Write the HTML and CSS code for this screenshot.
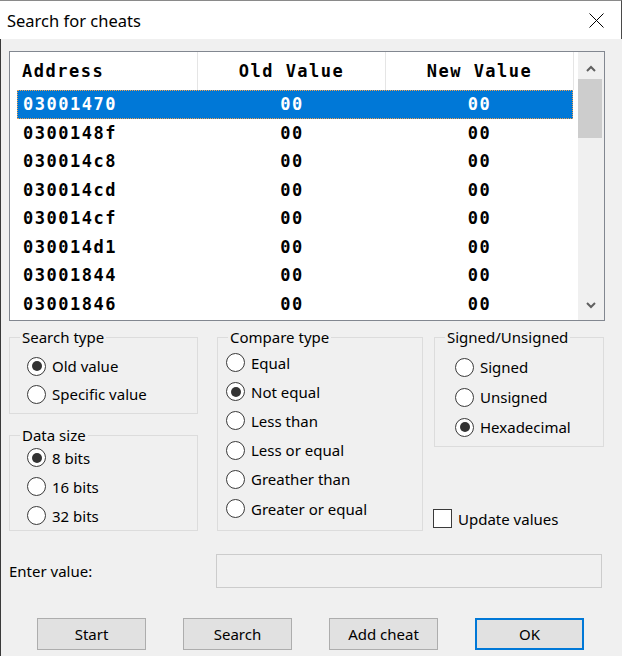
FILE: index.html
```html
<!DOCTYPE html>
<html>
<head>
<meta charset="utf-8">
<title>Search for cheats</title>
<link rel="stylesheet" href="styles.css">
</head>
<body>
<div class="window">
  <div class="titlebar">
    <span class="title">Search for cheats</span>
    <svg class="close" width="15" height="15" viewBox="0 0 15 15"><path d="M0.5 0.5L14.5 14.5M14.5 0.5L0.5 14.5" stroke="#000" stroke-width="1" fill="none"/></svg>
  </div>
  <div class="client">
    <div class="list">
      <div class="list-main">
        <div class="header">
          <div class="hcell hc-addr">Address</div>
          <div class="hcell">Old Value</div>
          <div class="hcell">New Value</div>
        </div>
        <div class="row sel"><span class="c1">03001470</span><span class="c2">00</span><span class="c3">00</span></div>
        <div class="row"><span class="c1">0300148f</span><span class="c2">00</span><span class="c3">00</span></div>
        <div class="row"><span class="c1">030014c8</span><span class="c2">00</span><span class="c3">00</span></div>
        <div class="row"><span class="c1">030014cd</span><span class="c2">00</span><span class="c3">00</span></div>
        <div class="row"><span class="c1">030014cf</span><span class="c2">00</span><span class="c3">00</span></div>
        <div class="row"><span class="c1">030014d1</span><span class="c2">00</span><span class="c3">00</span></div>
        <div class="row"><span class="c1">03001844</span><span class="c2">00</span><span class="c3">00</span></div>
        <div class="row"><span class="c1">03001846</span><span class="c2">00</span><span class="c3">00</span></div>
      </div>
      <div class="scrollbar">
        <div class="sb-up"><svg width="10" height="7" viewBox="0 0 10 7"><polyline points="1,6 5,2 9,6" fill="none" stroke="#606060" stroke-width="2"/></svg></div>
        <div class="sb-thumb"></div>
        <div class="sb-space"></div>
        <div class="sb-down"><svg width="10" height="7" viewBox="0 0 10 7"><polyline points="1,1 5,5 9,1" fill="none" stroke="#606060" stroke-width="2"/></svg></div>
      </div>
    </div>

    <div class="groups">
      <div class="col-left">
        <div class="group g-search">
          <div class="gtitle">Search type</div>
          <div class="opts">
            <div class="opt"><span class="radio checked"></span><span>Old value</span></div>
            <div class="opt"><span class="radio"></span><span>Specific value</span></div>
          </div>
        </div>
        <div class="group g-size">
          <div class="gtitle">Data size</div>
          <div class="opts">
            <div class="opt"><span class="radio checked"></span><span>8 bits</span></div>
            <div class="opt"><span class="radio"></span><span>16 bits</span></div>
            <div class="opt"><span class="radio"></span><span>32 bits</span></div>
          </div>
        </div>
      </div>

      <div class="group g-compare">
        <div class="gtitle">Compare type</div>
        <div class="opts">
          <div class="opt"><span class="radio"></span><span>Equal</span></div>
          <div class="opt"><span class="radio checked"></span><span>Not equal</span></div>
          <div class="opt"><span class="radio"></span><span>Less than</span></div>
          <div class="opt"><span class="radio"></span><span>Less or equal</span></div>
          <div class="opt"><span class="radio"></span><span>Greather than</span></div>
          <div class="opt"><span class="radio"></span><span>Greater or equal</span></div>
        </div>
      </div>

      <div class="col-right">
        <div class="group g-signed">
          <div class="gtitle">Signed/Unsigned</div>
          <div class="opts">
            <div class="opt"><span class="radio"></span><span>Signed</span></div>
            <div class="opt"><span class="radio"></span><span>Unsigned</span></div>
            <div class="opt"><span class="radio checked"></span><span>Hexadecimal</span></div>
          </div>
        </div>
        <div class="check-row"><span class="checkbox"></span><span>Update values</span></div>
      </div>
    </div>

    <div class="enter-row">
      <span class="enter-label">Enter value:</span>
      <div class="enter-input"></div>
    </div>

    <div class="buttons">
      <div class="btn">Start</div>
      <div class="btn">Search</div>
      <div class="btn">Add cheat</div>
      <div class="btn default">OK</div>
    </div>
  </div>
</div>
</body>
</html>
```

FILE: styles.css
```css
* { box-sizing: border-box; }
html, body { margin: 0; padding: 0; }
body {
  width: 622px;
  height: 656px;
  overflow: hidden;
  background: #f0f0f0;
  font-family: "Noto Sans", "Open Sans", sans-serif;
  font-size: 15px;
  color: #000;
}
.window {
  width: 622px;
  height: 656px;
  display: flex;
  flex-direction: column;
}
.titlebar {
  height: 39px;
  flex: none;
  background: #fff;
  display: flex;
  align-items: center;
  justify-content: space-between;
  padding: 0 17px 0 7px;
  border-top: 1px solid #8a8a8a;
  border-right: 1px solid #4a4a4a;
}
.title {
  font-size: 16.5px;
  line-height: 20px;
  margin-top: 2px;
}
.close { display: block; }
.client {
  flex: 1;
  padding: 12px 0 0 8px;
  border-left: 1px solid #3a3a3a;
}

/* list view */
.list {
  width: 596px;
  height: 270px;
  border: 1px solid #828790;
  background: #fff;
  display: flex;
}
.list-main { width: 568px; }
.header, .row {
  font-family: "DejaVu Sans Mono", "Liberation Mono", monospace;
  font-weight: bold;
  font-size: 17px;
  letter-spacing: 1.5px;
}
.header {
  display: flex;
  height: 38px;
}
.hcell {
  width: 188px;
  border-right: 1px solid #e5e5e5;
  display: flex;
  align-items: center;
  justify-content: center;
}
.hc-addr {
  justify-content: flex-start;
  padding-left: 12px;
}
.row {
  display: flex;
  align-items: center;
  height: 28.5px;
  width: 556px;
  margin-left: 7px;
}
.c1 { width: 181px; padding-left: 6px; }
.c2 { width: 188px; text-align: center; }
.c3 { width: 187px; text-align: center; }
.row.sel {
  background: #0078d7;
  color: #fff;
  outline: 1px dotted #f0a050;
  outline-offset: -1px;
}
.scrollbar {
  width: 26px;
  background: #f0f0f0;
  display: flex;
  flex-direction: column;
}
.sb-up {
  height: 27px;
  padding-top: 5px;
  display: flex;
  align-items: center;
  justify-content: center;
}
.sb-thumb {
  height: 59px;
  margin-right: 2px;
  background: #cdcdcd;
}
.sb-space { flex: 1; }
.sb-down {
  height: 30px;
  display: flex;
  align-items: center;
  justify-content: center;
}
.sb-up svg, .sb-down svg { display: block; }

/* groups */
.groups {
  display: flex;
  align-items: flex-start;
  margin-top: 16px;
}
.col-left {
  width: 189px;
  display: flex;
  flex-direction: column;
  gap: 21px;
}
.group {
  border: 1px solid #dcdcdc;
}
.gtitle {
  margin-top: -9px;
  margin-left: 10px;
  padding: 0 2px;
  width: fit-content;
  height: 16px;
  line-height: 16px;
  background: #f0f0f0;
  white-space: nowrap;
}
.opt {
  display: flex;
  align-items: center;
  white-space: nowrap;
}
.radio {
  width: 19px;
  height: 19px;
  flex: none;
  border: 1.5px solid #3a3a3a;
  border-radius: 50%;
  background: #fff;
  margin-right: 6px;
  display: flex;
  align-items: center;
  justify-content: center;
}
.radio.checked::after {
  content: "";
  width: 10px;
  height: 10px;
  border-radius: 50%;
  background: #333;
}
.g-search { height: 77px; }
.g-search .opts { margin-top: 7px; }
.g-search .opt { height: 28px; padding-left: 17px; }
.g-size { height: 96px; }
.g-size .opt { height: 29px; padding-left: 17px; }
.g-compare {
  width: 206px;
  height: 194px;
  margin-left: 19px;
}
.g-compare .opts { margin-top: 3px; }
.g-compare .opt { height: 29.2px; padding-left: 8px; }
.col-right {
  width: 170px;
  margin-left: 11px;
}
.g-signed { height: 110px; }
.g-signed .opts { margin-top: 7px; }
.g-signed .opt { height: 30px; padding-left: 20px; }
.check-row {
  display: flex;
  align-items: center;
  margin-top: 62px;
  margin-left: -1px;
  height: 19px;
}
.checkbox {
  width: 19px;
  height: 19px;
  border: 1.5px solid #3a3a3a;
  background: #fff;
  margin-right: 6px;
  flex: none;
}

/* enter value */
.enter-row {
  display: flex;
  align-items: center;
  margin-top: 23px;
}
.enter-label { width: 207px; }
.enter-input {
  width: 386px;
  height: 34px;
  border: 1px solid #cccccc;
  background: #f0f0f0;
}

/* buttons */
.buttons {
  display: flex;
  gap: 37px;
  margin-top: 30px;
  padding-left: 28px;
}
.btn {
  width: 109px;
  height: 32px;
  background: #e1e1e1;
  border: 1px solid #adadad;
  display: flex;
  align-items: center;
  justify-content: center;
}
.btn.default {
  border: 2px solid #0078d7;
}
```
